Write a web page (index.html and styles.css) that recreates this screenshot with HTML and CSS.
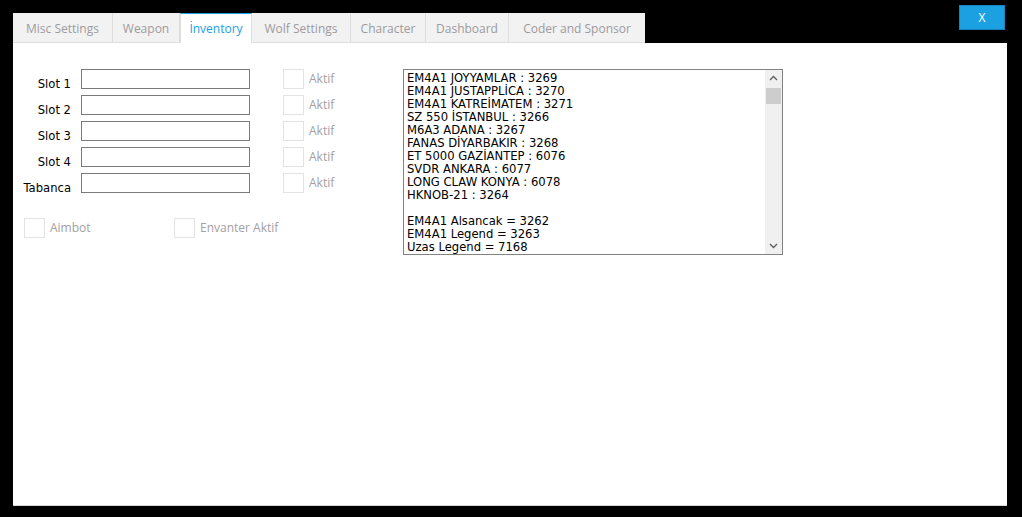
FILE: index.html
```html
<!DOCTYPE html>
<html lang="tr">
<head>
<meta charset="utf-8">
<title>Inventory</title>
<link rel="stylesheet" href="styles.css">
</head>
<body>
<div class="window">
  <div class="header">
    <div class="tabs">
      <div class="tab t-misc">Misc Settings</div>
      <div class="tab t-weapon">Weapon</div>
      <div class="tab t-inv active">İnventory</div>
      <div class="tab t-wolf">Wolf Settings</div>
      <div class="tab t-char">Character</div>
      <div class="tab t-dash">Dashboard</div>
      <div class="tab t-coder">Coder and Sponsor</div>
    </div>
    <button class="close">X</button>
  </div>
  <div class="panel">
    <div class="left">
      <div class="slots">
        <label class="slot-label">Slot 1</label><div class="textbox"></div><div class="check"><span class="box"></span><span class="check-text">Aktif</span></div>
        <label class="slot-label">Slot 2</label><div class="textbox"></div><div class="check"><span class="box"></span><span class="check-text">Aktif</span></div>
        <label class="slot-label">Slot 3</label><div class="textbox"></div><div class="check"><span class="box"></span><span class="check-text">Aktif</span></div>
        <label class="slot-label">Slot 4</label><div class="textbox"></div><div class="check"><span class="box"></span><span class="check-text">Aktif</span></div>
        <label class="slot-label">Tabanca</label><div class="textbox"></div><div class="check"><span class="box"></span><span class="check-text">Aktif</span></div>
      </div>
      <div class="toggles">
        <div class="check aimbot"><span class="box"></span><span class="check-text">Aimbot</span></div>
        <div class="check"><span class="box"></span><span class="check-text">Envanter Aktif</span></div>
      </div>
    </div>
    <div class="listbox">
      <div class="list-lines">
        <div>EM4A1 JOYYAMLAR : 3269</div>
        <div>EM4A1 JUSTAPPLİCA : 3270</div>
        <div>EM4A1 KATREİMATEM : 3271</div>
        <div>SZ 550 İSTANBUL : 3266</div>
        <div>M6A3 ADANA : 3267</div>
        <div>FANAS DİYARBAKIR : 3268</div>
        <div>ET 5000 GAZİANTEP : 6076</div>
        <div>SVDR ANKARA : 6077</div>
        <div>LONG CLAW KONYA : 6078</div>
        <div>HKNOB-21 : 3264</div>
        <div>&nbsp;</div>
        <div>EM4A1 Alsancak = 3262</div>
        <div>EM4A1 Legend = 3263</div>
        <div>Uzas Legend = 7168</div>
      </div>
      <div class="scrollbar">
        <svg class="arrow" width="17" height="17" viewBox="0 0 17 17"><path d="M5 10 L8.5 6.5 L12 10" fill="none" stroke="#606060" stroke-width="1.4"/></svg>
        <div class="track"><div class="thumb"></div></div>
        <svg class="arrow" width="17" height="17" viewBox="0 0 17 17"><path d="M5 7 L8.5 10.5 L12 7" fill="none" stroke="#606060" stroke-width="1.4"/></svg>
      </div>
    </div>
  </div>
</div>
</body>
</html>
```

FILE: styles.css
```css
html, body {
  margin: 0;
  padding: 0;
  background: #000;
}

.window {
  width: 1022px;
  height: 517px;
  background: #000;
}

.header {
  display: flex;
  align-items: flex-start;
  padding: 5px 17px 0 13px;
  height: 43px;
  box-sizing: border-box;
}

.tabs {
  display: flex;
  margin-top: 8px;
}

.tab {
  box-sizing: border-box;
  height: 30px;
  padding-top: 1px;
  line-height: 29px;
  text-align: center;
  font-family: "Open Sans", "Noto Sans", sans-serif;
  font-size: 12px;
  color: #9d9a9d;
  background: #f2f2f2;
  border-right: 1px solid #dedede;
  border-bottom: 1px solid #dedede;
  white-space: nowrap;
}

.t-misc { width: 100px; }
.t-weapon { width: 67px; }
.t-inv { width: 72px; }
.t-wolf { width: 99px; }
.t-char { width: 75px; }
.t-dash { width: 83px; }
.t-coder { width: 136px; border-right: none; }

.tab.active {
  background: #fff;
  color: #1ba1e2;
  border-top: 1px solid #1ba1e2;
  border-bottom: none;
  border-left: 1px solid #dedede;
  padding-top: 0;
  line-height: 29px;
}

.close {
  margin-left: auto;
  width: 46px;
  height: 25px;
  background: #1ba1e2;
  border: 1px solid #1782bb;
  color: #fff;
  font-family: "Open Sans", "Noto Sans", sans-serif;
  font-size: 12px;
  padding: 0;
}

.panel {
  margin-left: 13px;
  width: 994px;
  height: 463px;
  box-sizing: border-box;
  background: #fff;
  border-bottom: 1px solid #d6d6d6;
  display: flex;
  align-items: flex-start;
  padding-top: 26px;
}

.left {
  width: 390px;
  flex: none;
}

.slots {
  display: grid;
  grid-template-columns: 58px 169px 1fr;
  column-gap: 10px;
  row-gap: 6px;
}

.slot-label {
  align-self: end;
  text-align: right;
  font-family: "DejaVu Sans", Verdana, sans-serif;
  font-size: 11.6px;
  color: #000;
  line-height: 13px;
  margin-bottom: -2px;
}

.textbox {
  box-sizing: border-box;
  height: 20px;
  border: 1px solid #7a7a7a;
  background: #fff;
}

.check {
  display: flex;
  align-items: center;
  gap: 5px;
  margin-left: 23px;
}

.box {
  box-sizing: border-box;
  width: 21px;
  height: 20px;
  border: 1px solid #e3e3e3;
  background: #fff;
  flex: none;
}

.check-text {
  font-family: "Open Sans", "Noto Sans", sans-serif;
  font-size: 12px;
  color: #a3a0a3;
  margin-top: -1px;
}

.toggles {
  display: flex;
  margin-top: 25px;
  padding-left: 11px;
}

.toggles .check {
  margin-left: 0;
}

.toggles .aimbot {
  width: 150px;
}

.listbox {
  display: flex;
  box-sizing: border-box;
  width: 380px;
  height: 186px;
  border: 1px solid #828282;
  background: #fff;
}

.list-lines {
  flex: 1;
  overflow: hidden;
  padding: 2px 0 0 3px;
  font-family: "DejaVu Sans", Verdana, sans-serif;
  font-size: 11.6px;
  line-height: 13px;
  color: #000;
  white-space: nowrap;
}

.scrollbar {
  width: 17px;
  display: flex;
  flex-direction: column;
  background: #f0f0f0;
}

.arrow {
  display: block;
  flex: none;
}

.track {
  flex: 1;
  padding-top: 1px;
}

.thumb {
  width: 15px;
  margin-left: 1px;
  height: 16px;
  background: #cdcdcd;
}
```
